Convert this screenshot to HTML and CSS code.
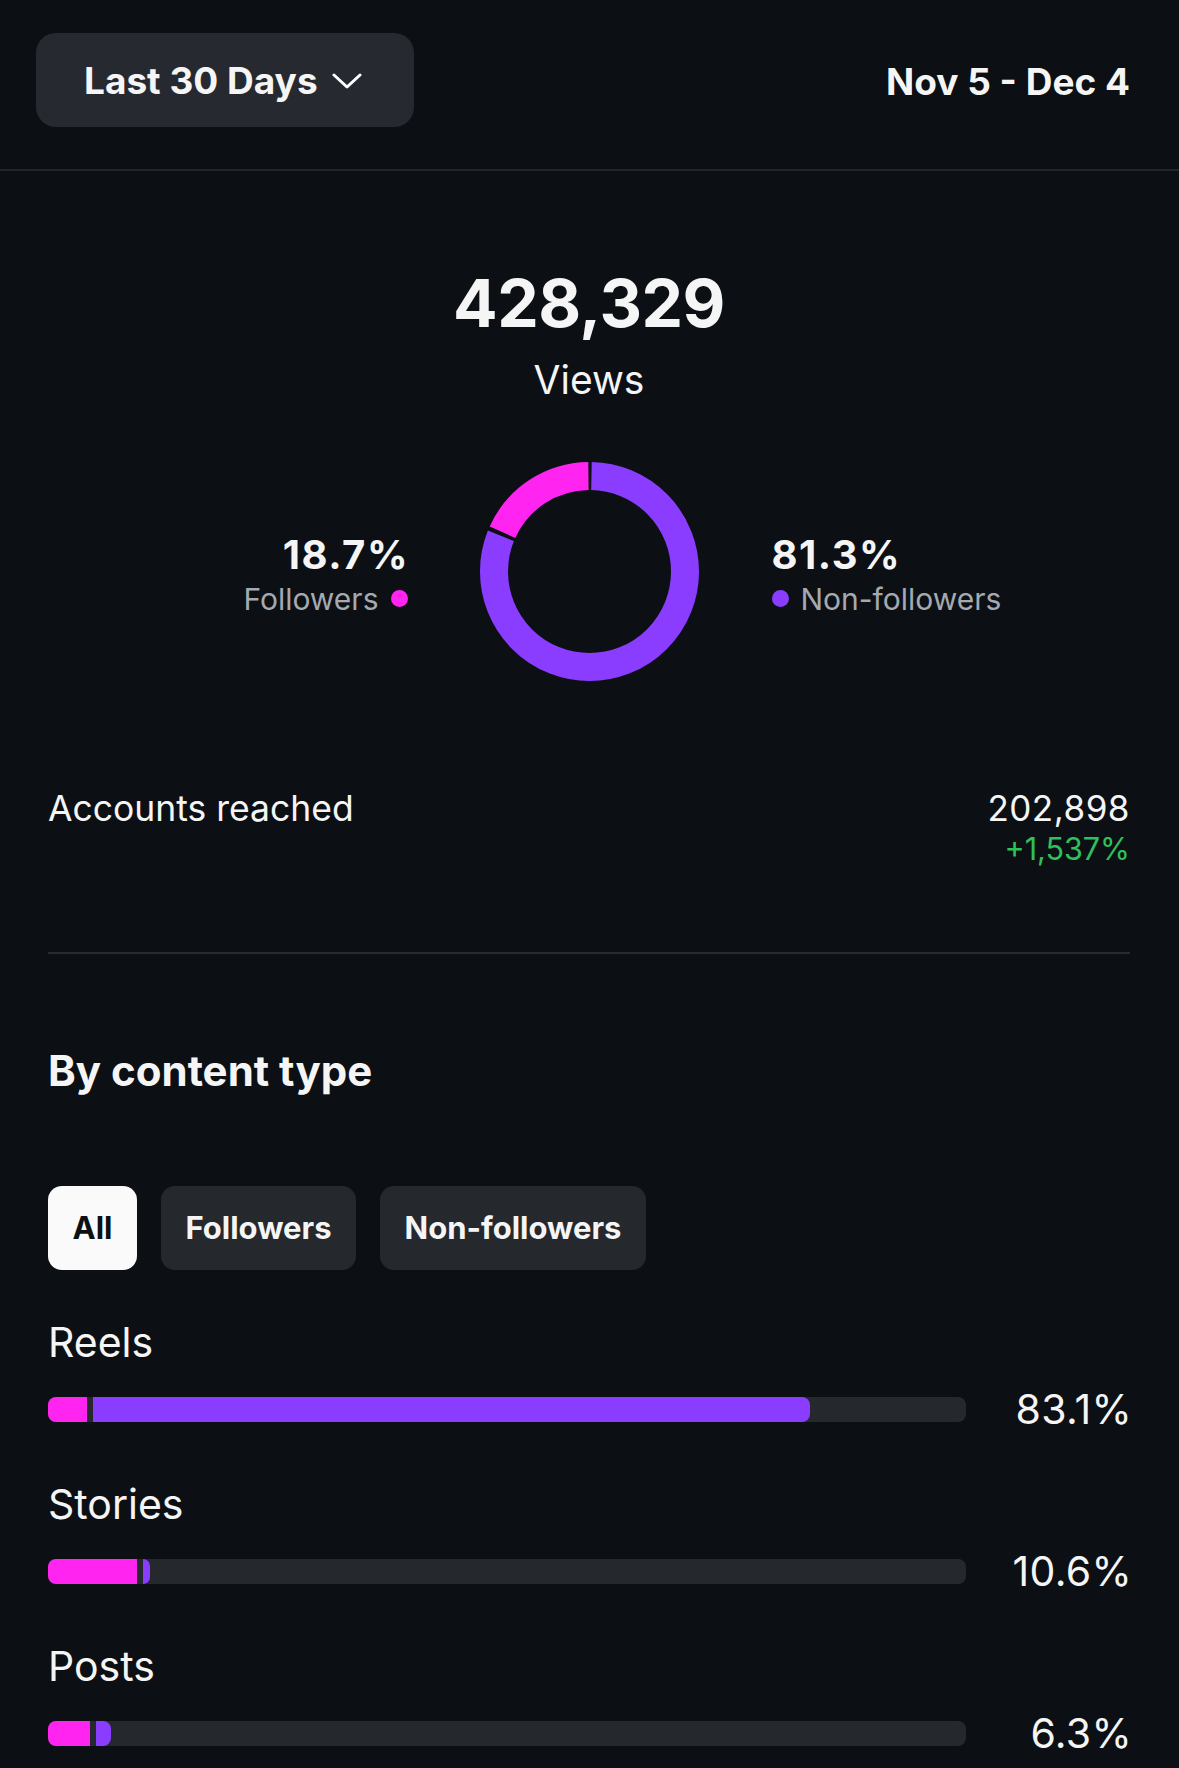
FILE: index.html
```html
<!DOCTYPE html>
<html lang="en">
<head>
<meta charset="utf-8">
<title>Views insights</title>
<link rel="stylesheet" href="styles.css">
</head>
<body>
<div class="page">
  <header class="topbar">
    <button class="range-btn">
      <span>Last 30 Days</span>
      <svg class="chev" width="30" height="16" viewBox="0 0 30 16"><path d="M2 2 L15 14 L28 2" fill="none" stroke="#fff" stroke-width="3" stroke-linecap="round" stroke-linejoin="round"/></svg>
    </button>
    <div class="date-range">Nov 5 - Dec 4</div>
  </header>

  <section class="summary">
    <div class="total">428,329</div>
    <div class="total-label">Views</div>

    <div class="donut-row">
      <div class="legend legend-left">
        <div class="legend-pct">18.7%</div>
        <div class="legend-name">Followers <span class="dot dot-pink"></span></div>
      </div>
      <svg class="donut" width="219" height="219" viewBox="0 0 219 219">
        <circle cx="109.5" cy="109.5" r="95.5" fill="none" stroke="#8b3dff" stroke-width="28" stroke-dasharray="483.8 116.2" stroke-dashoffset="-2" transform="rotate(-90 109.5 109.5)"/>
        <circle cx="109.5" cy="109.5" r="95.5" fill="none" stroke="#ff24f0" stroke-width="28" stroke-dasharray="108.2 491.8" stroke-dashoffset="-489.8" transform="rotate(-90 109.5 109.5)"/>
      </svg>
      <div class="legend legend-right">
        <div class="legend-pct">81.3%</div>
        <div class="legend-name"><span class="dot dot-purple"></span> Non-followers</div>
      </div>
    </div>

    <div class="reach-row">
      <div class="reach-label">Accounts reached</div>
      <div class="reach-values">
        <div class="reach-num">202,898</div>
        <div class="reach-change">+1,537%</div>
      </div>
    </div>
  </section>

  <div class="divider"></div>

  <section class="content-type">
    <h2 class="section-title">By content type</h2>
    <div class="chips">
      <div class="chip chip-active">All</div>
      <div class="chip">Followers</div>
      <div class="chip">Non-followers</div>
    </div>

    <div class="type-row">
      <div class="type-name">Reels</div>
      <div class="bar-line">
        <div class="track">
          <div class="seg seg-pink" style="width:39px"></div>
          <div class="seg seg-purple" style="width:717px"></div>
        </div>
        <div class="type-pct">83.1%</div>
      </div>
    </div>

    <div class="type-row">
      <div class="type-name">Stories</div>
      <div class="bar-line">
        <div class="track">
          <div class="seg seg-pink" style="width:89px"></div>
          <div class="seg seg-purple" style="width:7px"></div>
        </div>
        <div class="type-pct">10.6%</div>
      </div>
    </div>

    <div class="type-row">
      <div class="type-name">Posts</div>
      <div class="bar-line">
        <div class="track">
          <div class="seg seg-pink" style="width:42px"></div>
          <div class="seg seg-purple" style="width:15px"></div>
        </div>
        <div class="type-pct">6.3%</div>
      </div>
    </div>
  </section>
</div>
</body>
</html>
```

FILE: styles.css
```css
* { box-sizing: border-box; }

html, body {
  margin: 0;
  padding: 0;
  background: #0c1014;
}

body {
  font-family: "Inter", "Noto Sans", "Liberation Sans", sans-serif;
  color: #f5f5f5;
  width: 1179px;
  height: 1768px;
  overflow: hidden;
}

.page {
  display: flex;
  flex-direction: column;
}

.topbar {
  display: flex;
  align-items: center;
  justify-content: space-between;
  padding: 33px 49px 42px 36px;
  border-bottom: 2px solid #22262b;
}

.range-btn {
  display: flex;
  align-items: center;
  gap: 14px;
  height: 94px;
  padding: 0 52px 0 48px;
  background: #262a30;
  border: none;
  border-radius: 20px;
  color: #f5f5f5;
  font-family: inherit;
  font-size: 37px;
  font-weight: 700;
  line-height: 1;
}

.chev { display: block; margin-top: 2px; }

.date-range {
  font-size: 37px;
  font-weight: 700;
  line-height: 1;
  margin-top: 3px;
}

.summary {
  display: flex;
  flex-direction: column;
  align-items: center;
  padding: 99px 49px 0 48px;
}

.total {
  font-size: 66px;
  font-weight: 700;
  line-height: 1;
  letter-spacing: -0.5px;
}

.total-label {
  margin-top: 24px;
  font-size: 39px;
  font-weight: 400;
  line-height: 1;
}

.donut-row {
  margin-top: 63px;
  width: 100%;
  display: grid;
  grid-template-columns: 1fr auto 1fr;
  column-gap: 73px;
  align-items: center;
}

.donut { display: block; }

.legend {
  display: flex;
  flex-direction: column;
  gap: 9px;
  padding-top: 5px;
}

.legend-left { justify-self: end; align-items: flex-end; margin-right: -1px; }
.legend-right { justify-self: start; align-items: flex-start; }

.legend-pct {
  font-size: 40px;
  font-weight: 700;
  line-height: 1;
  letter-spacing: 1.5px;
}

.legend-left .legend-pct { margin-right: -1.5px; }

.legend-name {
  display: flex;
  align-items: center;
  gap: 12px;
  font-size: 30px;
  line-height: 1;
  color: #a5a9b0;
}

.dot {
  width: 17px;
  height: 17px;
  border-radius: 50%;
  display: inline-block;
}

.dot-pink { background: #ff24f0; }
.dot-purple { background: #8b3dff; }

.reach-row {
  margin-top: 110px;
  width: 100%;
  display: flex;
  justify-content: space-between;
  align-items: flex-start;
}

.reach-label {
  font-size: 35.5px;
  line-height: 1;
}

.reach-values {
  display: flex;
  flex-direction: column;
  align-items: flex-end;
  gap: 8px;
}

.reach-num {
  font-size: 35px;
  line-height: 1;
  letter-spacing: 0.5px;
}

.reach-change {
  font-size: 30.5px;
  line-height: 1;
  color: #2fc05a;
}

.divider {
  margin: 87px 49px 0 48px;
  height: 2px;
  background: #272b30;
}

.content-type {
  padding: 96px 49px 0 48px;
  display: flex;
  flex-direction: column;
}

.section-title {
  margin: 0;
  font-size: 42px;
  font-weight: 700;
  line-height: 1;
}

.chips {
  margin-top: 94px;
  display: flex;
  gap: 24px;
}

.chip {
  height: 84px;
  padding: 0 24.5px;
  display: flex;
  align-items: center;
  border-radius: 14px;
  background: #25292e;
  color: #f5f5f5;
  font-size: 31px;
  font-weight: 700;
  line-height: 1;
}

.chip-active {
  background: #fafafa;
  color: #0c1014;
}

.type-row {
  display: flex;
  flex-direction: column;
  margin-top: 52px;
}

.type-row + .type-row { margin-top: 62px; }

.type-name {
  font-size: 41px;
  line-height: 1;
}

.bar-line {
  margin-top: 34px;
  display: flex;
  align-items: center;
  height: 25px;
}

.track {
  width: 918px;
  height: 25px;
  border-radius: 8px;
  background: #25292e;
  display: flex;
  gap: 6px;
}

.seg { height: 100%; }

.seg-pink {
  background: #ff24f0;
  border-radius: 8px 0 0 8px;
}

.seg-purple {
  background: #8b3dff;
  border-radius: 0 8px 8px 0;
}

.type-pct {
  flex: 1;
  text-align: right;
  font-size: 41px;
  line-height: 1;
  letter-spacing: 0.3px;
  margin-right: -2px;
}
```
